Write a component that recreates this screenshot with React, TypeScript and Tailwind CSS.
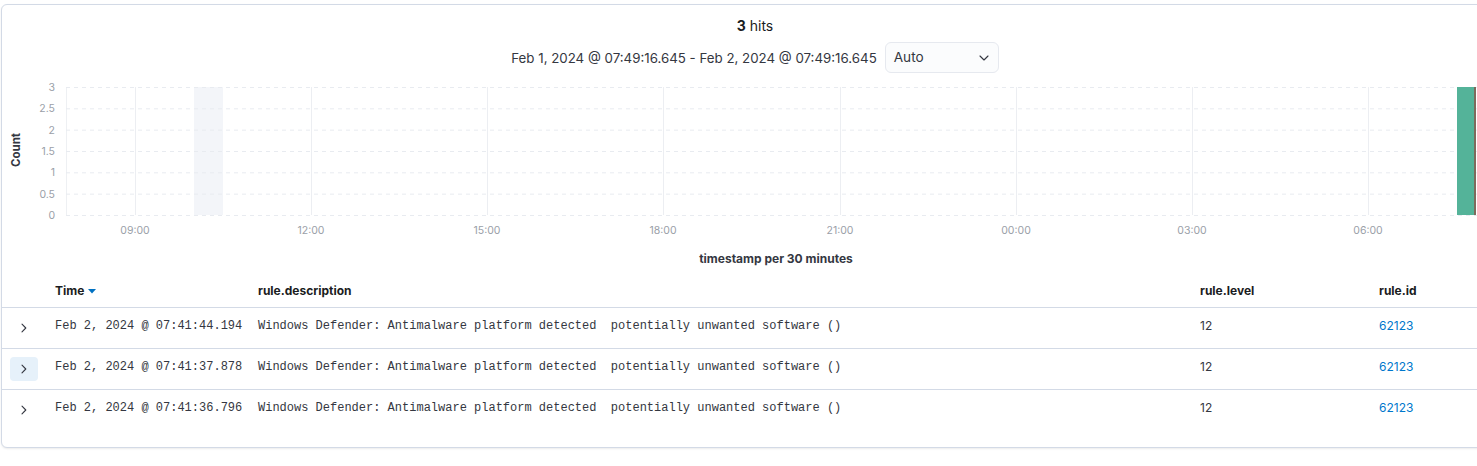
import React from 'react';

const yTicks = ['3', '2.5', '2', '1.5', '1', '0.5', '0'];
const xTicks = [
    { x: 135, label: '09:00' },
    { x: 311, label: '12:00' },
    { x: 487, label: '15:00' },
    { x: 663, label: '18:00' },
    { x: 840, label: '21:00' },
    { x: 1016, label: '00:00' },
    { x: 1192, label: '03:00' },
    { x: 1368, label: '06:00' },
];

const rows = [
    { time: 'Feb 2, 2024 @ 07:41:44.194', hover: false },
    { time: 'Feb 2, 2024 @ 07:41:37.878', hover: true },
    { time: 'Feb 2, 2024 @ 07:41:36.796', hover: false },
];

const description = 'Windows Defender: Antimalware platform detected  potentially unwanted software ()';

const Chevron = () => (
    <svg width="6" height="10" viewBox="0 0 6 10" fill="none">
        <path d="M1 1.2 L4.8 5 L1 8.8" stroke="#343741" strokeWidth="1.1" strokeLinecap="round" strokeLinejoin="round" />
    </svg>
);

const Histogram: React.FC = () => {
    const top = 7;
    const bottom = 135;
    const step = (bottom - top) / 6;
    return (
        <svg width="1476" height="198" className="block">
            {/* page coordinates, svg starts at x=2 */}
            <g transform="translate(-2 0)">
                <rect x="194" y={top} width="29" height={bottom - top} fill="#f3f5f9" />
                <line x1="66.5" y1={top} x2="66.5" y2={bottom} stroke="#eef0f3" />
                {xTicks.map((t) => (
                    <line key={t.x} x1={t.x + 0.5} y1={top} x2={t.x + 0.5} y2={bottom} stroke="#eceef2" />
                ))}
                {yTicks.map((v, i) => (
                    <line
                        key={v}
                        x1="66"
                        x2="1478"
                        y1={top + i * step + 0.5}
                        y2={top + i * step + 0.5}
                        stroke="#e8ebf0"
                        strokeDasharray="4 4"
                    />
                ))}
                {yTicks.map((v, i) => (
                    <text key={v} x="55" y={top + i * step + 4} textAnchor="end" fontSize="10.5" fill="#9aa0a8" fontFamily="Inter, sans-serif">
                        {v}
                    </text>
                ))}
                {xTicks.map((t) => (
                    <text key={t.label} x={t.x} y="154" textAnchor="middle" fontSize="10.5" fill="#9aa0a8" fontFamily="Inter, sans-serif">
                        {t.label}
                    </text>
                ))}
                <rect x="1457" y={top} width="17" height={bottom - top} fill="#54b399" />
                <rect x="1474" y={top} width="2" height={bottom - top} fill="#7e6a5c" />
                <text
                    x="16"
                    y="70"
                    transform="rotate(-90 16 70)"
                    textAnchor="middle"
                    dominantBaseline="central"
                    fontSize="11.5"
                    fontWeight="700"
                    fill="#343741"
                    fontFamily="Inter, sans-serif"
                >
                    Count
                </text>
                <text x="776" y="183" textAnchor="middle" fontSize="12" fontWeight="700" fill="#343741" fontFamily="Inter, sans-serif">
                    timestamp per 30 minutes
                </text>
            </g>
        </svg>
    );
};

export default function App() {
    return (
        <div className="w-[1477px] h-[466px] overflow-hidden bg-white pt-1 pl-px font-['Inter',sans-serif] text-[#343741]">
            <div className="w-[1508px] border border-[#d3dae6] rounded-md bg-white shadow-[0_1px_2px_rgba(0,0,0,0.08)]">
                {/* hits header */}
                <div className="flex flex-col items-center pt-[11px]">
                    <div className="text-[14px] leading-5 text-[#1a1c21]">
                        <span className="font-bold">3</span> hits
                    </div>
                    <div className="flex items-center gap-2 mt-[6px] h-[31px]">
                        <span className="text-[13.3px] leading-5">Feb 1, 2024 @ 07:49:16.645 - Feb 2, 2024 @ 07:49:16.645</span>
                        <div className="flex items-center justify-between w-[114px] h-[31px] pl-2 pr-[9px] rounded-md border border-[#e6e9ef] bg-[#fbfcfd] text-[13.6px]">
                            <span>Auto</span>
                            <svg width="10" height="6" viewBox="0 0 10 6" fill="none">
                                <path d="M1 1 L5 5 L9 1" stroke="#343741" strokeWidth="1.1" strokeLinecap="round" strokeLinejoin="round" />
                            </svg>
                        </div>
                    </div>
                </div>

                <div className="mt-[7px]">
                    <Histogram />
                </div>

                {/* doc table */}
                <div className="text-[12px]">
                    <div className="grid grid-cols-[53px_203px_942px_179px_1fr] h-[30px] pb-[4px] items-center border-b border-[#d3dae6] font-bold text-[#1a1c21]">
                        <div />
                        <div className="flex items-center gap-1">
                            Time
                            <svg width="8" height="5" viewBox="0 0 8 5" className="mt-[2px]">
                                <path d="M0 0 L8 0 L4 4.5 Z" fill="#0071c2" />
                            </svg>
                        </div>
                        <div>rule.description</div>
                        <div>rule.level</div>
                        <div>rule.id</div>
                    </div>
                    {rows.map((r, i) => (
                        <div
                            key={r.time}
                            className={`grid grid-cols-[53px_203px_942px_179px_1fr] items-start pt-[9px] ${i < rows.length - 1 ? 'h-[41px] border-b border-[#d3dae6]' : 'h-[40px]'}`}
                        >
                            <div className="pl-2 -mt-px">
                                <div className={`w-7 h-6 flex items-center justify-center rounded ${r.hover ? 'bg-[#e6f1fa]' : ''}`}>
                                    <Chevron />
                                </div>
                            </div>
                            <div className="font-['Liberation_Mono',monospace] leading-[18px] whitespace-pre">{r.time}</div>
                            <div className="font-['Liberation_Mono',monospace] leading-[18px] whitespace-pre">{description}</div>
                            <div className="leading-[18px]">12</div>
                            <div className="leading-[18px] text-[#0077cc]">62123</div>
                        </div>
                    ))}
                    <div className="h-[17px]" />
                </div>
            </div>
        </div>
    );
}
